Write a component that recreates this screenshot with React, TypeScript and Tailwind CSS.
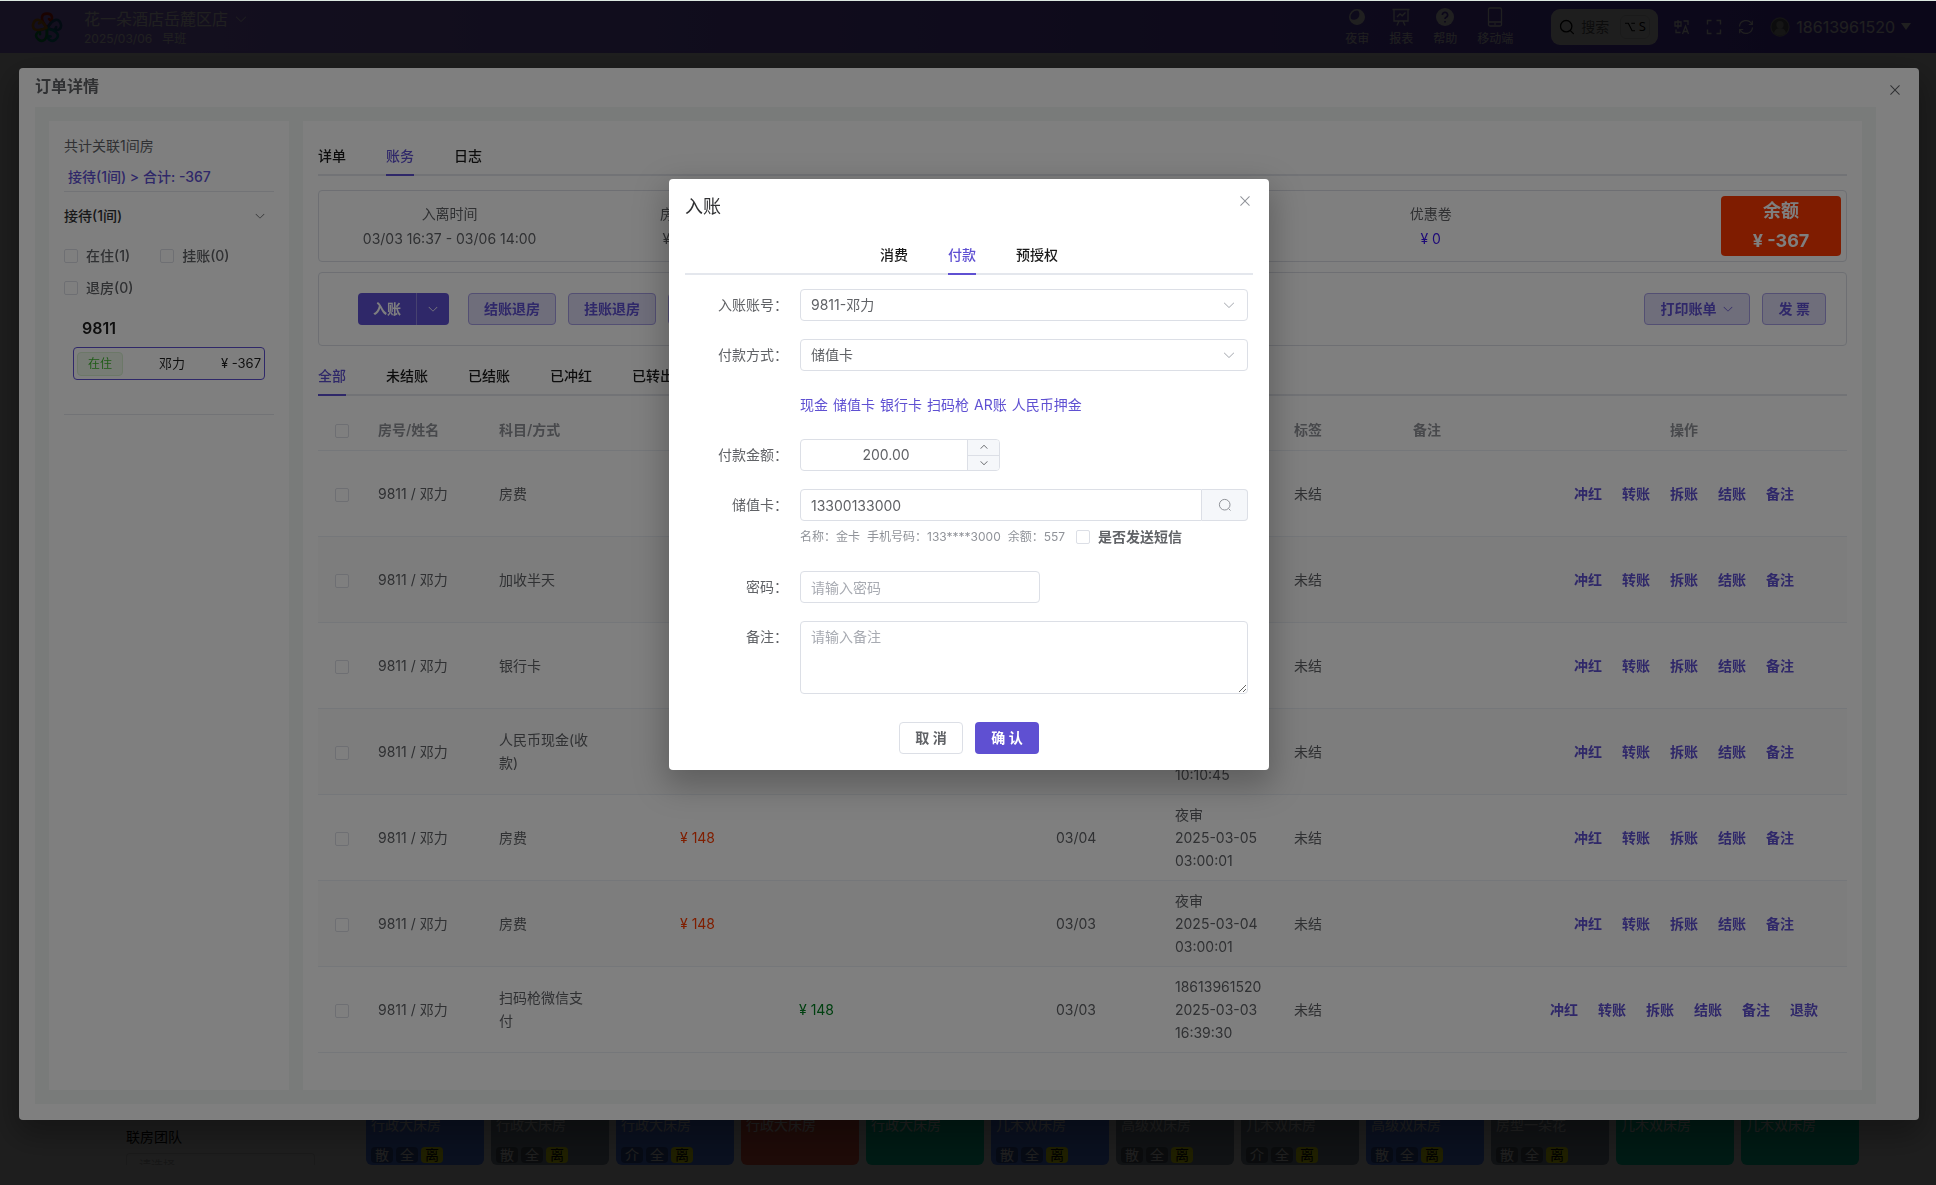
import { useState, type ReactNode } from "react";

const FONT = "font-['Inter','Noto_Sans_CJK_SC',sans-serif]";

function ChevronDown({ className = "" }: { className?: string }) {
  return (
    <svg viewBox="0 0 1024 1024" fill="currentColor" aria-hidden="true" className={`pointer-events-none ${className}`}>
      <path d="M831.872 340.864 512 652.672 192.128 340.864a30.592 30.592 0 0 0-42.752 0 29.12 29.12 0 0 0 0 41.6L489.664 714.24a32 32 0 0 0 44.672 0l340.288-331.712a29.12 29.12 0 0 0 0-41.728 30.592 30.592 0 0 0-42.752 0z" />
    </svg>
  );
}

function Cross({ className = "" }: { className?: string }) {
  return (
    <svg viewBox="0 0 1024 1024" fill="currentColor" aria-hidden="true" className={className}>
      <path d="M764.288 214.592 512 466.88 259.712 214.592a31.936 31.936 0 0 0-45.12 45.12L466.752 512 214.528 764.224a31.936 31.936 0 1 0 45.12 45.184L512 557.184l252.288 252.288a31.936 31.936 0 0 0 45.12-45.12L557.12 512.064l252.288-252.352a31.936 31.936 0 1 0-45.12-45.184z" />
    </svg>
  );
}

function Logo() {
  const petal = "M16 16.5 C12 12 10.5 9 11 6 C12 1.5 20 1.5 21 6 C21.5 9 19.5 10 18 8 M16 16.5 C18.5 14 20.5 11.5 21 8";
  return (
    <svg viewBox="0 0 32 32" fill="none" strokeWidth="2.6" strokeLinecap="round" className="h-8 w-8" aria-label="logo">
      <path d={petal} stroke="#d01808" />
      <path d={petal} stroke="#185890" transform="rotate(72 16 17)" />
      <path d={petal} stroke="#008090" transform="rotate(144 16 17)" />
      <path d={petal} stroke="#009048" transform="rotate(216 16 17)" />
      <path d={petal} stroke="#c07010" transform="rotate(288 16 17)" />
    </svg>
  );
}

function NavItem({ label, children }: { label: string; children: ReactNode }) {
  return (
    <button type="button" className="flex flex-col items-center gap-1 text-xs leading-4">
      <svg viewBox="0 0 20 20" className="h-5 w-5" fill="none" stroke="currentColor" strokeWidth="1.3" aria-hidden="true">
        {children}
      </svg>
      {label}
    </button>
  );
}

function Header() {
  return (
    <header className="flex h-[53px] items-center justify-between bg-linear-to-r from-[#9878f0] from-10% to-[#5838c8] pr-[25px] pl-[31px] text-white">
      <div className="flex items-center gap-[21px]">
        <Logo />
        <div className="flex flex-col">
          <button type="button" className="flex items-center gap-1.5 text-base leading-6">
            花一朵酒店岳麓区店
            <ChevronDown className="h-3.5 w-3.5" />
          </button>
          <div className="flex gap-2.5 text-xs leading-4">
            <span>2025/03/06</span>
            <span>早班</span>
          </div>
        </div>
      </div>
      <div className="flex items-center">
        <nav className="flex gap-5">
          <NavItem label="夜审">
            <circle cx="10" cy="10" r="7.2" stroke="currentColor" strokeWidth="1.5" />
            <path d="M10.500 3a7.200 7.200 0 1 1-7.300 8.500A5.600 5.600 0 0 0 10.500 3z" fill="currentColor" stroke="none" />
          </NavItem>
          <NavItem label="报表">
            <path d="M1.5 2.5h17M3 2.5v11.5h14V2.5M6 10l3-3.2 2.2 2L14.500 5.500M8 14l-2 4.500M12 14l2 4.500" />
          </NavItem>
          <NavItem label="帮助">
            <circle cx="10" cy="10" r="9" fill="currentColor" stroke="none" />
            <path d="M7.400 8a2.600 2.600 0 1 1 3.800 2.200c-.9.500-1.200.9-1.200 1.900M10 14v1.500" stroke="#5c3ccc" strokeWidth="1.700" />
          </NavItem>
          <NavItem label="移动端">
            <path d="M5 1h10a1.500 1.500 0 0 1 1.500 1.500v15A1.500 1.500 0 0 1 15 19H5a1.500 1.500 0 0 1-1.500-1.500v-15A1.500 1.500 0 0 1 5 1zM3.500 15h13M9.300 17h1.400" />
          </NavItem>
        </nav>
        <button type="button" className="ml-[38px] flex h-9 w-[107px] items-center gap-1.5 rounded-[9px] bg-[#f4f4f4] pr-2 pl-2 text-sm text-[#606060]">
          <svg viewBox="0 0 16 16" className="h-4 w-4 text-black" fill="none" stroke="currentColor" strokeWidth="1.300" strokeLinecap="round" aria-hidden="true">
            <circle cx="7.200" cy="7.200" r="5.700" />
            <path d="M11.400 11.600l3 3" />
          </svg>
          搜索
          <kbd className="ml-auto flex h-6 w-[30px] items-center justify-center gap-1 rounded-md border border-[#d0d0d0] font-sans text-[13px] text-black">
            <svg viewBox="0 0 12 12" className="h-2.5 w-2.5" fill="none" stroke="currentColor" strokeWidth="1.400" aria-hidden="true">
              <path d="M0 1.500h4l4.500 9H12M7.500 1.500H12" />
            </svg>
            S
          </kbd>
        </button>
        <div className="ml-4 flex items-center gap-4">
          <button type="button" aria-label="语言">
            <svg viewBox="0 0 16 16" className="h-4 w-4" fill="none" stroke="currentColor" strokeWidth="1.300" aria-hidden="true">
              <path d="M1 3h6v4H1zM4 1v8.500M9.500 2h4.500v4M2 10.500v3h4.500M8.500 15l3-8 3 8M9.500 12.500h4" />
            </svg>
          </button>
          <button type="button" aria-label="全屏">
            <svg viewBox="0 0 16 16" className="h-4 w-4" fill="none" stroke="currentColor" strokeWidth="1.400" aria-hidden="true">
              <path d="M1.500 5.500v-4h4M10.500 1.500h4v4M14.500 10.500v4h-4M5.500 14.500h-4v-4" />
            </svg>
          </button>
          <button type="button" aria-label="刷新">
            <svg viewBox="0 0 16 16" className="h-4 w-4" fill="none" stroke="currentColor" strokeWidth="1.200" aria-hidden="true">
              <path d="M1.500 7.500a6.500 6.500 0 0 1 12.300-2.300M14.500 8.500a6.500 6.500 0 0 1-12.300 2.300M14.300 1.800v3.700h-3.500M1.700 14.200v-3.700h3.500" />
            </svg>
          </button>
        </div>
        <button type="button" className="ml-4 flex items-center gap-1.5 text-base">
          <svg viewBox="0 0 22 22" className="h-5 w-5" aria-hidden="true">
            <circle cx="11" cy="11" r="10" fill="#606068" stroke="#a0a0a0" strokeWidth="1.200" />
            <circle cx="11" cy="8.500" r="4" fill="#a8a8a8" />
            <path d="M4.500 18a6.500 6 0 0 1 13 0 10 10 0 0 1-13 0z" fill="#a8a8a8" />
          </svg>
          18613961520
          <svg viewBox="0 0 10 7" className="h-[7px] w-2.5" fill="currentColor" aria-hidden="true">
            <path d="M0 0h10L5 7z" />
          </svg>
        </button>
      </div>
    </header>
  );
}

type Room = { name: string; tone: string; tags: string[] };
const BLUE = "bg-[#5080f8]";
const GREY = "bg-[#8090a0]";
const RED = "bg-[#f05840]";
const GREEN = "bg-[#00d0a0]";
const rooms: Room[] = [
  { name: "行政大床房", tone: BLUE, tags: ["散", "全", "离"] },
  { name: "行政大床房", tone: GREY, tags: ["散", "全", "离"] },
  { name: "行政大床房", tone: BLUE, tags: ["介", "全", "离"] },
  { name: "行政大床房", tone: RED, tags: [] },
  { name: "行政大床房", tone: GREEN, tags: [] },
  { name: "几木双床房", tone: BLUE, tags: ["散", "全", "离"] },
  { name: "高级双床房", tone: GREY, tags: ["散", "全", "离"] },
  { name: "几木双床房", tone: GREY, tags: ["介", "全", "离"] },
  { name: "高级双床房", tone: BLUE, tags: ["散", "全", "离"] },
  { name: "房型一朵花", tone: GREY, tags: ["散", "全", "离"] },
  { name: "几木双床房", tone: GREEN, tags: [] },
  { name: "几木双床房", tone: GREEN, tags: [] },
];

function RoomBoard() {
  return (
    <div className="flex flex-1 items-end bg-[#f0f0f0] pb-5">
      <aside className="ml-[101px] flex w-[239px] flex-col gap-1 px-[25px]">
        <span className="text-sm leading-6 text-black">联房团队</span>
        <div className="h-3 overflow-hidden rounded-t border border-b-0 border-[#d0d0d0] px-3 text-xs leading-6 text-[#b0b0b0]">请选择</div>
      </aside>
      <div className="mr-[77px] ml-[26px] grid flex-1 grid-cols-12 gap-[7px]">
        {rooms.map((room, i) => (
          <div key={i} className={`flex h-24 flex-col justify-between rounded-md px-[5px] pt-[46px] pb-0.5 text-white ${room.tone}`}>
            <span className="text-sm leading-5">{room.name}</span>
            <div className="flex h-4 gap-[3px] text-sm leading-4">
              {room.tags.map((tag) => (
                <span
                  key={tag}
                  className={tag === "离" ? "w-[22px] rounded-sm bg-[#ffff00] text-center text-black" : "w-[22px] rounded-sm bg-black/35 text-center"}
                >
                  {tag}
                </span>
              ))}
            </div>
          </div>
        ))}
      </div>
    </div>
  );
}

function Checkbox({ label, text }: { label: string; text?: ReactNode }) {
  return (
    <label className="inline-flex items-center gap-2 align-middle">
      <input
        type="checkbox"
        aria-label={label}
        className="block h-3.5 w-3.5 shrink-0 appearance-none rounded-xs border border-[#dcdfe6] bg-white checked:border-[#5f50d2] checked:bg-[#5f50d2]"
      />
      {text}
    </label>
  );
}

function Tabs({ items, active, onPick, centered = false }: { items: string[]; active: string; onPick: (t: string) => void; centered?: boolean }) {
  return (
    <div role="tablist" className={`flex h-10 gap-10 border-b-2 border-[#e4e7ed] text-sm font-medium ${centered ? "justify-center" : ""}`}>
      {items.map((item) => (
        <button
          key={item}
          type="button"
          role="tab"
          aria-selected={item === active}
          onClick={() => onPick(item)}
          className={`-mb-0.5 border-b-2 pt-0.5 ${item === active ? "border-[#5f50d2] text-[#5f50d2]" : "border-transparent text-[#1a1a1a]"}`}
        >
          {item}
        </button>
      ))}
    </div>
  );
}

function SidePanel() {
  return (
    <aside className="w-60 shrink-0 bg-white p-[15px] text-sm">
      <p className="leading-5 text-[#606266]">共计关联1间房</p>
      <p className="mt-[7px] border-b border-[#e4e7ed] px-1 leading-7 font-medium text-[#5f50d2]">接待(1间) &gt; 合计: -367</p>
      <button type="button" className="flex h-12 w-full items-center justify-between pr-2 font-medium text-[#303133]">
        接待(1间)
        <ChevronDown className="h-3 w-3 text-[#606266]" />
      </button>
      <div className="flex flex-wrap gap-x-[30px] font-medium text-[#606266] *:h-8">
        <Checkbox label="在住" text="在住(1)" />
        <Checkbox label="挂账" text="挂账(0)" />
        <Checkbox label="退房" text="退房(0)" />
      </div>
      <h3 className="mt-3 pl-[18px] text-base leading-6 font-semibold text-[#1f1f1f]">9811</h3>
      <button type="button" className="mt-[7px] ml-[9px] flex h-[33px] w-48 items-center justify-between rounded border border-[#5f50d2] px-[3px] text-[13px] text-[#1f1f1f]">
        <span className="rounded border border-[#d8f0d0] bg-[#eef9ea] px-2.5 text-xs leading-[22px] text-[#42b832]">在住</span>
        <span>邓力</span>
        <span>¥ -367</span>
      </button>
      <hr className="mt-[34px] border-[#e4e7ed]" />
    </aside>
  );
}

type Entry = { subject: string; spend?: string; pay?: string; day?: string; log: string[]; refund?: boolean };
const entries: Entry[] = [
  { subject: "房费", log: [] },
  { subject: "加收半天", log: [] },
  { subject: "银行卡", log: [] },
  { subject: "人民币现金(收款)", log: ["18613961520", "2025-03-05", "10:10:45"] },
  { subject: "房费", spend: "¥ 148", day: "03/04", log: ["夜审", "2025-03-05", "03:00:01"] },
  { subject: "房费", spend: "¥ 148", day: "03/03", log: ["夜审", "2025-03-04", "03:00:01"] },
  { subject: "扫码枪微信支付", pay: "¥ 148", day: "03/03", log: ["18613961520", "2025-03-03", "16:39:30"], refund: true },
];
const actions = ["冲红", "转账", "拆账", "结账", "备注"];

function BillTable() {
  return (
    <table className="mt-3.5 w-full table-fixed border-collapse text-left text-sm leading-[23px] text-[#606266]">
      <colgroup>
        <col className="w-12" />
        <col className="w-[121px]" />
        <col className="w-[120px]" />
        <col className="w-[61px]" />
        <col className="w-[119px]" />
        <col className="w-[257px]" />
        <col className="w-[119px]" />
        <col className="w-[119px]" />
        <col className="w-[119px]" />
        <col className="w-[120px]" />
        <col className="w-[326px]" />
      </colgroup>
      <thead>
        <tr className="h-10 border-b border-[#ebeef5] text-[#909399] *:px-3 *:font-semibold">
          <th className="text-center">
            <Checkbox label="全选" />
          </th>
          <th>房号/姓名</th>
          <th>科目/方式</th>
          <th />
          <th />
          <th />
          <th />
          <th />
          <th>标签</th>
          <th>备注</th>
          <th className="text-center">操作</th>
        </tr>
      </thead>
      <tbody>
        {entries.map((e, i) => (
          <tr key={i} className="h-[86px] border-b border-[#ebeef5] even:bg-[#fafafa] *:px-3">
            <td className="text-center">
              <Checkbox label={`选择第${i + 1}行`} />
            </td>
            <td>9811 / 邓力</td>
            <td>{e.subject}</td>
            <td />
            <td className="text-[#ff3c00]">{e.spend}</td>
            <td className="text-[#008020]">{e.pay}</td>
            <td>{e.day}</td>
            <td>
              {e.log.map((line) => (
                <div key={line}>{line}</div>
              ))}
            </td>
            <td>未结</td>
            <td />
            <td>
              <div className="flex justify-center gap-5 font-semibold text-[#5f50d2]">
                {(e.refund ? [...actions, "退款"] : actions).map((a) => (
                  <button key={a} type="button">
                    {a}
                  </button>
                ))}
              </div>
            </td>
          </tr>
        ))}
      </tbody>
    </table>
  );
}

const PLAIN = "flex h-8 items-center justify-center rounded border border-[#a79ee6] bg-[#dfdcf6] px-[15px] font-semibold text-[#5f50d2]";

function OrderContent() {
  const [tab, setTab] = useState("账务");
  const [filter, setFilter] = useState("全部");
  return (
    <section className="min-w-0 flex-1 bg-white p-[15px] text-sm">
      <Tabs items={["详单", "账务", "日志"]} active={tab} onPick={setTab} />
      <div className="mt-3.5 flex h-[72px] items-center rounded border border-[#dcdfe6] pr-[5px] pl-2 leading-[25px] text-[#606266] *:text-center">
        <div className="w-[16.2%]">
          <p>入离时间</p>
          <p>03/03 16:37 - 03/06 14:00</p>
        </div>
        <div className="w-[16.2%]">
          <p>房费总金额</p>
          <p>¥ 1000.00</p>
        </div>
        <div className="w-[16.2%]" />
        <div className="w-[16.2%]" />
        <div className="w-[16.2%]">
          <p>优惠卷</p>
          <p className="text-[#3c14f0]">¥ 0</p>
        </div>
        <div className="ml-auto w-[120px] rounded bg-[#ff3800] text-lg leading-[30px] font-bold text-white">
          <p>余额</p>
          <p>¥ -367</p>
        </div>
      </div>
      <div className="mt-2.5 flex h-[74px] items-center gap-3 rounded border border-[#dcdfe6] pr-5 pl-[39px]">
        <div className="mr-[7px] flex h-8 overflow-hidden rounded bg-[#5f50d2] text-white">
          <button type="button" className="border-r border-[#8f84e0] px-[15px] font-bold">
            入账
          </button>
          <button type="button" aria-label="更多入账" className="flex w-8 items-center justify-center">
            <ChevronDown className="h-3 w-3" />
          </button>
        </div>
        <button type="button" className={PLAIN}>结账退房</button>
        <button type="button" className={PLAIN}>挂账退房</button>
        <button type="button" className={PLAIN}>部分结账</button>
        <button type="button" className={`${PLAIN} ml-auto gap-1.5`}>
          打印账单
          <ChevronDown className="h-3 w-3" />
        </button>
        <button type="button" className={PLAIN}>发 票</button>
      </div>
      <div className="mt-2.5">
        <Tabs items={["全部", "未结账", "已结账", "已冲红", "已转出"]} active={filter} onPick={setFilter} />
      </div>
      <BillTable />
    </section>
  );
}

function OrderDialog() {
  return (
    <div className="fixed inset-0 bg-black/75 pt-[68px] pr-[17px] pb-[65px] pl-[19px]">
      <div role="dialog" aria-label="订单详情" className="flex h-full flex-col rounded bg-white pr-[43px] pb-4 pl-4 shadow-[0_12px_32px_4px_rgba(0,0,0,0.3)]">
        <div className="flex h-[39px] shrink-0 items-center justify-between pb-1">
          <h2 className="text-base font-semibold text-[#606266]">订单详情</h2>
          <button type="button" aria-label="关闭" className="-mr-[27px] pt-2 text-[#606266]">
            <Cross className="h-4 w-4" />
          </button>
        </div>
        <div className="flex min-h-0 flex-1 gap-3.5 overflow-hidden bg-[#f2f7f5] p-3.5">
          <SidePanel />
          <OrderContent />
        </div>
      </div>
    </div>
  );
}

const FIELD = "h-8 rounded border border-[#dcdfe6] bg-white px-[10px] text-sm text-[#606266] outline-none placeholder:text-[#a8abb2]";

function Row({ id, label, children }: { id?: string; label?: string; children: ReactNode }) {
  return (
    <div className="flex pr-[5px]">
      <label htmlFor={id} className="w-[115px] shrink-0 pr-3 text-right text-sm leading-8 text-[#606266]">
        {label}
      </label>
      <div className="min-w-0 flex-1">{children}</div>
    </div>
  );
}

function Select({ id, value }: { id: string; value: string }) {
  return (
    <div className="relative">
      <select id={id} defaultValue={value} className={`${FIELD} block w-full appearance-none`}>
        <option>{value}</option>
      </select>
      <ChevronDown className="absolute top-[9px] right-3 h-3.5 w-3.5 text-[#a8abb2]" />
    </div>
  );
}

function PaymentDialog() {
  const [tab, setTab] = useState("付款");
  const [amount, setAmount] = useState(200);
  return (
    <div className="fixed inset-0 flex items-start justify-center bg-black/50 pt-[179px] pl-0.5">
      <div role="dialog" aria-label="入账" className="w-[600px] rounded bg-white p-4 shadow-[0_12px_32px_4px_rgba(0,0,0,0.25)]">
        <div className="flex h-10 items-start justify-between">
          <h2 className="text-lg leading-6 text-[#303133]">入账</h2>
          <button type="button" aria-label="关闭" className="-mt-0.5 text-[#909399]">
            <Cross className="h-4 w-4" />
          </button>
        </div>
        <Tabs items={["消费", "付款", "预授权"]} active={tab} onPick={setTab} centered />
        <form className="mt-3.5 flex flex-col gap-[18px]" onSubmit={(e) => e.preventDefault()}>
          <Row id="account" label="入账账号：">
            <Select id="account" value="9811-邓力" />
          </Row>
          <Row id="method" label="付款方式：">
            <Select id="method" value="储值卡" />
          </Row>
          <Row>
            <div className="flex gap-[5px] text-sm leading-8 text-[#5f50d2]">
              {["现金", "储值卡", "银行卡", "扫码枪", "AR账", "人民币押金"].map((m) => (
                <a key={m} href={`#${m}`}>
                  {m}
                </a>
              ))}
            </div>
          </Row>
          <Row id="amount" label="付款金额：">
            <div className="flex h-8 w-[200px] overflow-hidden rounded border border-[#dcdfe6]">
              <input
                id="amount"
                inputMode="decimal"
                value={amount.toFixed(2)}
                onChange={(e) => setAmount(Number(e.target.value) || 0)}
                className="min-w-0 flex-1 pl-1 text-center text-sm text-[#606266] outline-none"
              />
              <div className="flex w-8 flex-col border-l border-[#dcdfe6] bg-[#f5f7fa] text-[#606266]">
                <button type="button" aria-label="增加" onClick={() => setAmount(amount + 1)} className="flex flex-1 items-center justify-center border-b border-[#dcdfe6]">
                  <ChevronDown className="h-2.5 w-2.5 rotate-180" />
                </button>
                <button type="button" aria-label="减少" onClick={() => setAmount(amount - 1)} className="flex flex-1 items-center justify-center">
                  <ChevronDown className="h-2.5 w-2.5" />
                </button>
              </div>
            </div>
          </Row>
          <Row id="card" label="储值卡：">
            <div className="flex h-8">
              <input id="card" defaultValue="13300133000" className={`${FIELD} min-w-0 flex-1 rounded-r-none`} />
              <button type="button" aria-label="查询" className="flex w-[46px] items-center justify-center rounded-r border border-l-0 border-[#dcdfe6] bg-[#f5f7fa] text-[#909399]">
                <svg viewBox="0 0 14 14" className="h-3.5 w-3.5" fill="none" stroke="currentColor" aria-hidden="true">
                  <circle cx="6.700" cy="6.700" r="5.300" />
                  <path d="M10.500 10.500l2 2" />
                </svg>
              </button>
            </div>
            <div className="flex h-8 items-center gap-[7px] text-xs text-[#909399]">
              <span>名称：金卡</span>
              <span>手机号码：133****3000</span>
              <span>余额：557</span>
              <div className="ml-1 flex text-sm font-semibold text-[#606266]">
                <Checkbox label="是否发送短信" text="是否发送短信" />
              </div>
            </div>
          </Row>
          <Row id="password" label="密码：">
            <input id="password" type="password" placeholder="请输入密码" className={`${FIELD} block w-60`} />
          </Row>
          <Row id="remark" label="备注：">
            <textarea
              id="remark"
              placeholder="请输入备注"
              className="block h-[73px] w-full resize-y rounded border border-[#dcdfe6] px-[10px] py-1 text-sm leading-[21px] outline-none placeholder:text-[#a8abb2]"
            />
          </Row>
        </form>
        <div className="mt-7 flex justify-center gap-3 text-sm">
          <button type="button" className="h-8 w-16 rounded border border-[#dcdfe6] bg-white font-semibold text-[#606266]">取 消</button>
          <button type="submit" className="h-8 w-16 rounded bg-[#5f50d2] font-bold text-white">确 认</button>
        </div>
      </div>
    </div>
  );
}

export default function App() {
  return (
    <div lang="zh-CN" className={FONT}>
      <div className="flex min-h-screen flex-col">
        <Header />
        <RoomBoard />
      </div>
      <OrderDialog />
      <PaymentDialog />
      <div className="fixed inset-x-0 top-0 h-px bg-[#dce8e0]" />
    </div>
  );
}
